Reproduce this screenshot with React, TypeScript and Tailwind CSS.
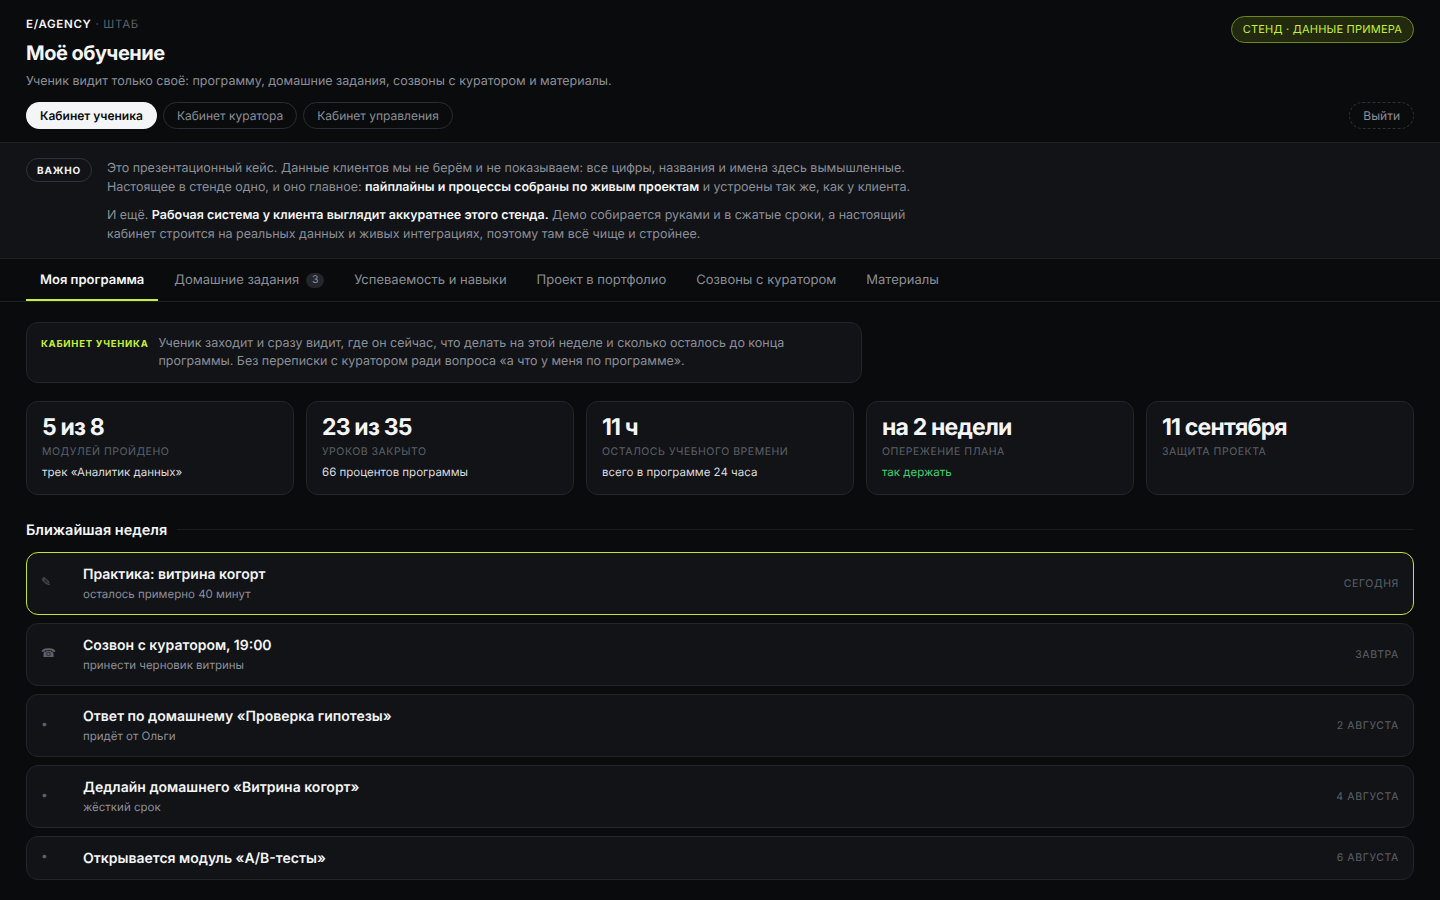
const roles = ["Кабинет ученика", "Кабинет куратора", "Кабинет управления"];

const tabs = [
  { name: "Моя программа", active: true },
  { name: "Домашние задания", badge: "3" },
  { name: "Успеваемость и навыки" },
  { name: "Проект в портфолио" },
  { name: "Созвоны с куратором" },
  { name: "Материалы" },
];

const stats = [
  { value: "5 из 8", label: "модулей пройдено", note: "трек «Аналитик данных»" },
  { value: "23 из 35", label: "уроков закрыто", note: "66 процентов программы" },
  { value: "11 ч", label: "осталось учебного времени", note: "всего в программе 24 часа" },
  { value: "на 2 недели", label: "опережение плана", note: "так держать", good: true },
  { value: "11 сентября", label: "защита проекта" },
];

const events = [
  { icon: "✎", title: "Практика: витрина когорт", sub: "осталось примерно 40 минут", when: "сегодня", current: true },
  { icon: "☎", title: "Созвон с куратором, 19:00", sub: "принести черновик витрины", when: "завтра" },
  { icon: "•", title: "Ответ по домашнему «Проверка гипотезы»", sub: "придёт от Ольги", when: "2 августа" },
  { icon: "•", title: "Дедлайн домашнего «Витрина когорт»", sub: "жёсткий срок", when: "4 августа" },
  { icon: "•", title: "Открывается модуль «A/B-тесты»", when: "6 августа" },
];

export default function App() {
  return (
    <div className="min-h-screen bg-[#0a0b0d] text-[#f4f5f6] font-['Inter',sans-serif] [text-rendering:geometricPrecision]">
      <header className="px-[26px] pt-4 pb-[13px]">
        <div className="flex items-start justify-between">
          <div>
            <div className="text-[11.5px] leading-4 tracking-[0.06em]">
              <span className="font-semibold">E/AGENCY</span>
              <span className="text-[#5c6068]"> · ШТАБ</span>
            </div>
            <h1 className="mt-[8px] text-[20px] leading-[26px] font-bold tracking-[-0.025em]">Моё обучение</h1>
            <p className="mt-[6px] text-[12.5px] leading-[20px] text-[#8b8f97]">
              Ученик видит только своё: программу, домашние задания, созвоны с куратором и материалы.
            </p>
          </div>
          <div className="rounded-full border border-[#6d8a1f] bg-[#22290f] px-[11px] h-[27px] flex items-center text-[11px] tracking-[0.02em] text-[#c5f135]">
            СТЕНД · ДАННЫЕ ПРИМЕРА
          </div>
        </div>
        <div className="mt-[10px] flex items-center justify-between">
          <div className="flex gap-[6px]">
            {roles.map((role, i) => (
              <div
                key={role}
                className={
                  i === 0
                    ? "h-[27px] px-[14px] flex items-center rounded-full bg-[#f4f5f6] text-[#0a0b0d] text-[12px] font-semibold"
                    : "h-[27px] px-[13px] flex items-center rounded-full border border-[#2a2d33] text-[#8b8f97] text-[12px]"
                }
              >
                {role}
              </div>
            ))}
          </div>
          <div className="h-[27px] px-[13px] flex items-center rounded-full border border-dashed border-[#2f3238] text-[#8b8f97] text-[12px]">
            Выйти
          </div>
        </div>
      </header>

      <section className="bg-[#121317] border-y border-[#1f2126] px-[26px] pt-[15px] pb-[14px] flex items-start gap-[15px]">
        <div className="h-6 px-[10px] pt-[2px] flex items-center rounded-full border border-[#2f3238] text-[10px] font-bold tracking-[0.08em] text-[#f4f5f6]">
          ВАЖНО
        </div>
        <div className="pt-px w-[820px] text-[12.48px] leading-[19px] text-[#8b8f97]">
          <p>
            Это презентационный кейс. Данные клиентов мы не берём и не показываем: все цифры, названия и имена здесь вымышленные. Настоящее в стенде одно, и оно главное: <b className="font-semibold text-[#f4f5f6]">пайплайны и процессы собраны по живым проектам</b> и устроены так же, как у клиента.
          </p>
          <p className="mt-[9px]">
            И ещё. <b className="font-semibold text-[#f4f5f6]">Рабочая система у клиента выглядит аккуратнее этого стенда.</b> Демо собирается руками и в сжатые сроки, а настоящий кабинет строится на реальных данных и живых интеграциях, поэтому там всё чище и стройнее.
          </p>
        </div>
      </section>

      <nav className="px-[26px] flex gap-[2px] border-b border-[#1f2126]">
        {tabs.map((tab) => (
          <div
            key={tab.name}
            className={
              tab.active
                ? "h-[42px] px-[14px] pt-[4px] flex items-center border-b-2 border-[#c5f135] text-[13px] font-semibold -mb-px"
                : "h-[42px] px-[14px] pt-[2px] flex items-center gap-[7px] text-[13px] text-[#8b8f97]"
            }
          >
            {tab.name}
            {tab.badge && (
              <span className="mb-[2px] h-[15px] min-w-[18px] flex items-center justify-center rounded-full bg-[#24262b] text-[10.5px] text-[#8b8f97]">
                {tab.badge}
              </span>
            )}
          </div>
        ))}
      </nav>

      <main className="px-[26px] pt-5 pb-5">
        <div className="w-[836px] rounded-xl border border-[#23252b] bg-[#121317] pl-[14px] pr-4 pt-[12px] pb-[11px] flex gap-[10px]">
          <div className="text-[9.5px] leading-[20px] font-bold tracking-[0.08em] text-[#c5f135] whitespace-nowrap">КАБИНЕТ УЧЕНИКА</div>
          <p className="text-[12.48px] leading-[18px] text-[#8b8f97]">
            Ученик заходит и сразу видит, где он сейчас, что делать на этой неделе и сколько осталось до конца программы. Без переписки с куратором ради вопроса «а что у меня по программе».
          </p>
        </div>

        <div className="mt-[18px] grid grid-cols-5 gap-3">
          {stats.map((stat) => (
            <div key={stat.label} className="h-[94px] rounded-xl border border-[#23252b] bg-[#121317] px-[15px] pt-[10px]">
              <div className="text-[23px] leading-[30px] font-bold tracking-[-0.035em]">{stat.value}</div>
              <div className="mt-[2px] text-[10.5px] leading-[16px] tracking-[0.05em] uppercase text-[#5c6068]">{stat.label}</div>
              {stat.note && (
                <div className={`mt-[3px] text-[11.5px] leading-[18px] ${stat.good ? "text-[#3ecf6e]" : "text-[#d9dbde]"}`}>{stat.note}</div>
              )}
            </div>
          ))}
        </div>

        <div className="mt-[26px] flex items-center gap-[10px]">
          <h2 className="text-[14.5px] leading-[20px] font-semibold whitespace-nowrap">Ближайшая неделя</h2>
          <div className="mb-[4px] h-px flex-1 bg-[#1a1c20]" />
        </div>

        <div className="mt-[11px] flex flex-col gap-[8px]">
          {events.map((item) => (
            <div
              key={item.title}
              className={`rounded-xl border bg-[#121317] pl-[14px] pr-[14px] flex items-center ${item.sub ? "h-[63px]" : "h-[44px]"} ${item.current ? "border-[#c0e830]" : "border-[#23252b]"}`}
            >
              <div className="mb-[4px] w-[42px] text-[12px] text-[#5c6068]">{item.icon}</div>
              <div className={`flex-1 ${item.sub ? "mb-[2px]" : ""}`}>
                <div className="pt-[2px] text-[14px] leading-[20px] font-semibold">{item.title}</div>
                {item.sub && <div className="text-[11.5px] leading-[18px] text-[#8b8f97]">{item.sub}</div>}
              </div>
              <div className="text-[10.5px] tracking-[0.06em] uppercase text-[#5c6068]">{item.when}</div>
            </div>
          ))}
        </div>
      </main>
    </div>
  );
}
